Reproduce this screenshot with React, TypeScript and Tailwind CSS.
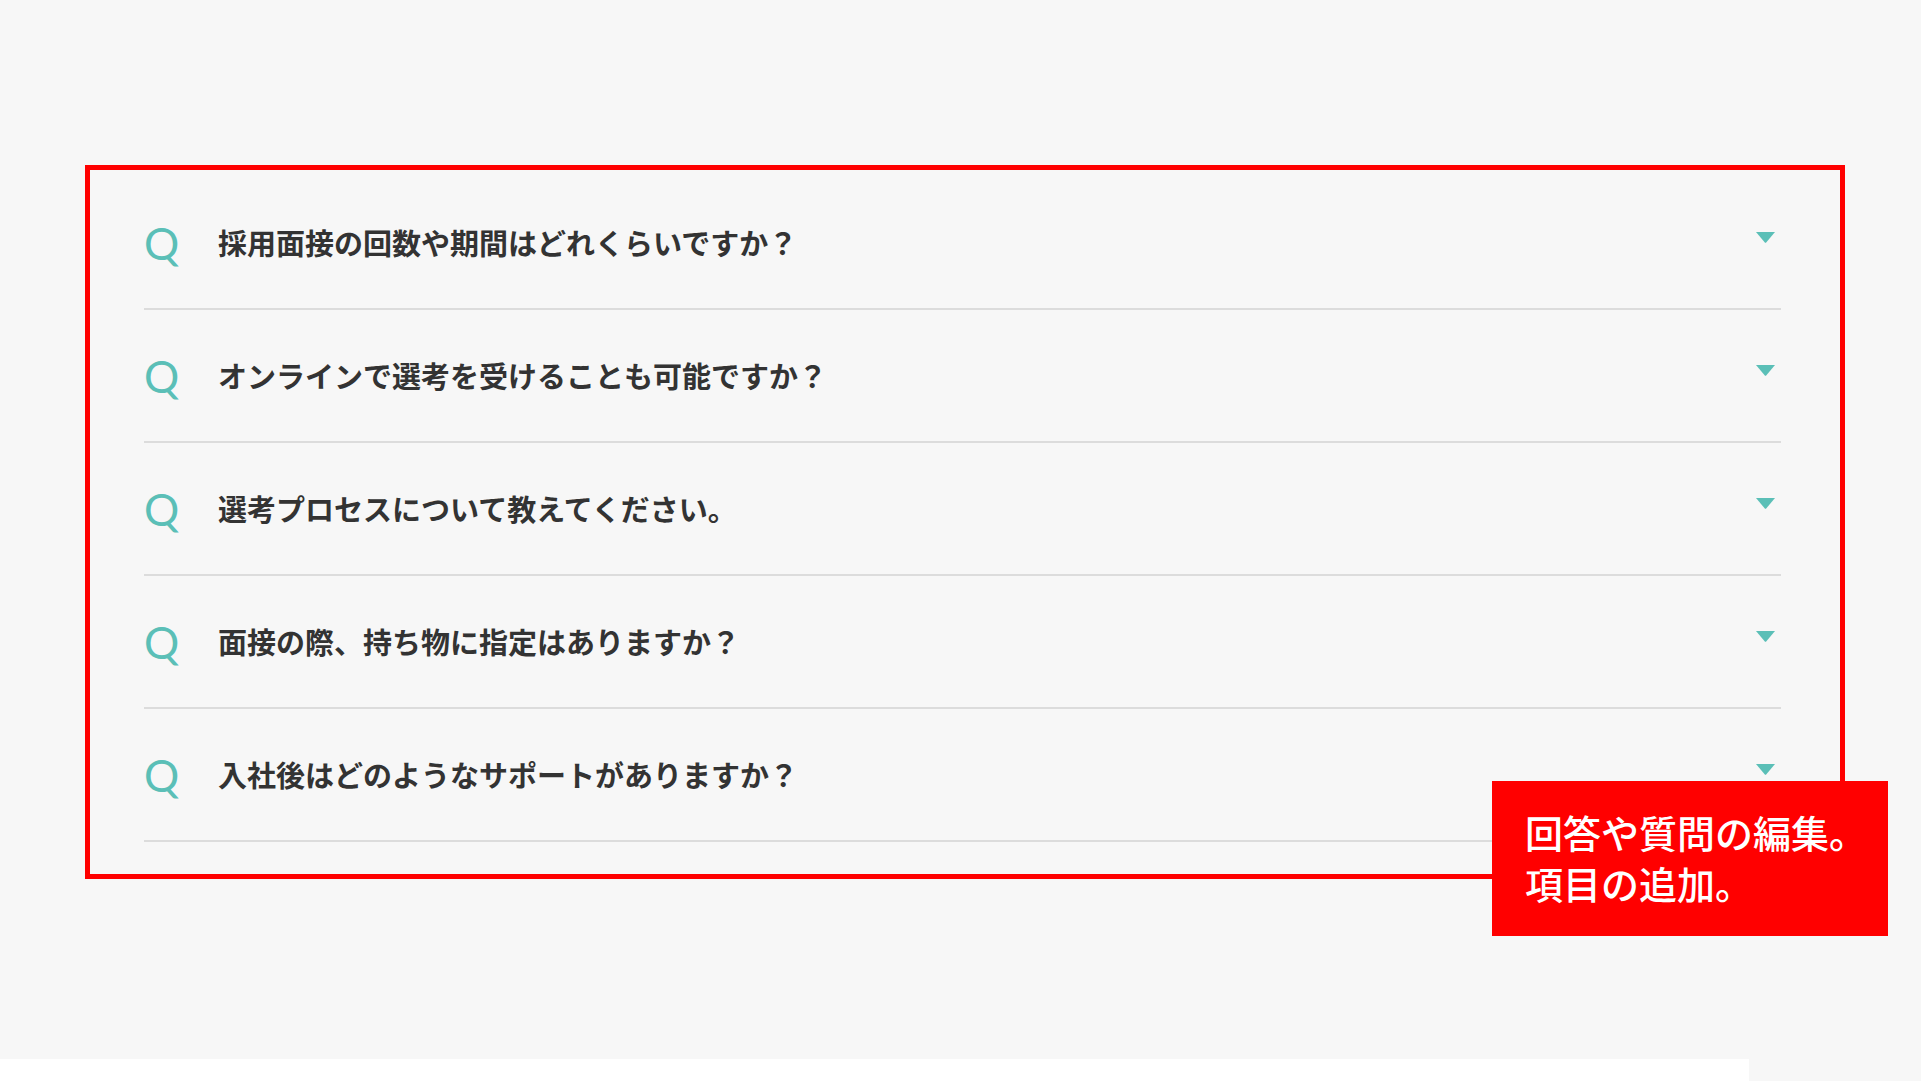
const questions = [
  "採用面接の回数や期間はどれくらいですか？",
  "オンラインで選考を受けることも可能ですか？",
  "選考プロセスについて教えてください。",
  "面接の際、持ち物に指定はありますか？",
  "入社後はどのようなサポートがありますか？",
];

function Caret() {
  return (
    <svg width="19" height="11" viewBox="0 0 19 11" className="mr-[6px] mb-[10px] shrink-0">
      <path d="M0 0H19L10.4 10.2Q9.5 11.2 8.6 10.2Z" fill="#5bbfb7" />
    </svg>
  );
}

function FaqRow({ text }: { text: string }) {
  return (
    <div className="flex h-[133px] items-center border-b-2 border-[#dcdcdc]">
      <span className="w-[74px] shrink-0 font-['Lato',sans-serif] text-[44px] leading-none font-normal text-[#5bbfb7]">
        Q
      </span>
      <p className="flex-1 font-['Noto_Sans_CJK_JP','Noto_Sans',sans-serif] text-[29px] leading-none font-bold text-[#333333]">
        {text}
      </p>
      <Caret />
    </div>
  );
}

export default function App() {
  return (
    <div className="relative h-[1081px] w-full overflow-hidden bg-[#f7f7f7]">
      <section className="mt-[165px] ml-[85px] w-[1760px] border-[5px] border-[#ff0000] pt-[7px] pr-[59px] pb-[32px] pl-[54px]">
        {questions.map((q) => (
          <FaqRow key={q} text={q} />
        ))}
      </section>
      <div className="mt-[180px] h-[22px] w-[1749px] bg-white" />
      <div className="absolute top-[781px] left-[1492px] h-[155px] w-[396px] bg-[#ff0000] pt-[25px] pl-[33px] font-['Noto_Sans_CJK_JP','Noto_Sans',sans-serif] text-[38px] leading-[51px] font-medium text-white">
        <p>回答や質問の編集。</p>
        <p>項目の追加。</p>
      </div>
    </div>
  );
}
